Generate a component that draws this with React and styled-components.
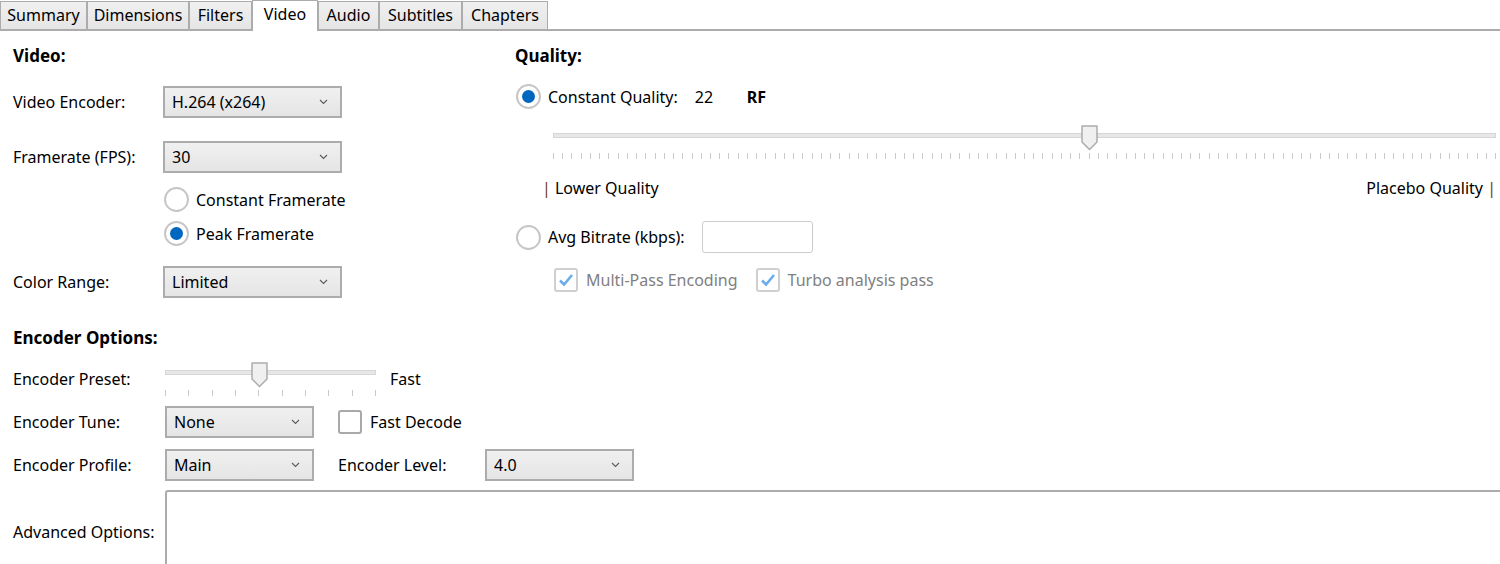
import React from "react";
import styled, { createGlobalStyle } from "styled-components";

const GlobalStyle = createGlobalStyle`
  html, body {
    margin: 0;
    padding: 0;
    background: #fff;
  }
  body {
    font-family: "Noto Sans", "Open Sans", sans-serif;
    font-size: 16px;
    color: #000;
    overflow: hidden;
  }
`;

const Window = styled.div`
  width: 1500px;
  height: 564px;
  overflow: hidden;
  background: #fff;
`;

const TabStrip = styled.div`
  display: flex;
  align-items: flex-end;
  height: 31px;
  box-sizing: border-box;
  border-bottom: 2px solid #acacac;
`;

const Tab = styled.div`
  box-sizing: border-box;
  width: ${(p) => p.$w}px;
  height: ${(p) => (p.$active ? 31 : 28)}px;
  margin-bottom: ${(p) => (p.$active ? -2 : 0)}px;
  padding-bottom: ${(p) => (p.$active ? 5 : 1)}px;
  display: flex;
  align-items: center;
  justify-content: center;
  border: 1px solid #acacac;
  border-bottom: none;
  background: ${(p) => (p.$active ? "#fff" : "linear-gradient(#f0f0f0, #e5e5e5)")};
  position: relative;
  z-index: ${(p) => (p.$active ? 1 : 0)};
`;

const Columns = styled.div`
  display: grid;
  grid-template-columns: 502px 1fr;
  padding-left: 13px;
`;

const Column = styled.div`
  display: flex;
  flex-direction: column;
`;

const SectionTitle = styled.div`
  font-weight: 700;
  font-size: 17px;
  line-height: 20px;
  height: 20px;
  margin-top: ${(p) => p.$mt}px;
`;

const Row = styled.div`
  display: flex;
  align-items: center;
  height: ${(p) => p.$h}px;
  margin-top: ${(p) => p.$mt}px;
  margin-left: ${(p) => p.$ml || 0}px;
  white-space: nowrap;
`;

const Label = styled.div`
  width: ${(p) => p.$w}px;
  flex-shrink: 0;
  margin-left: ${(p) => p.$ml || 0}px;
  white-space: nowrap;
`;

const SelectBox = styled.div`
  box-sizing: border-box;
  width: ${(p) => p.$w}px;
  height: 32px;
  border: 2px solid #acacac;
  background: linear-gradient(#f0f0f0, #e5e5e5);
  display: flex;
  align-items: center;
  justify-content: space-between;
  padding: 0 12px 0 7px;
  flex-shrink: 0;
`;

const Chevron = () => (
  <svg width="9" height="6" viewBox="0 0 9 6">
    <path d="M1 1 L4.5 4.5 L8 1" fill="none" stroke="#5a5a5a" strokeWidth="1.1" />
  </svg>
);

const Select = ({ w, value }) => (
  <SelectBox $w={w}>
    <span>{value}</span>
    <Chevron />
  </SelectBox>
);

const RadioCircle = styled.span`
  box-sizing: border-box;
  width: 25px;
  height: 25px;
  border-radius: 50%;
  border: 2px solid #c6c6c6;
  background: #fff;
  display: flex;
  align-items: center;
  justify-content: center;
  flex-shrink: 0;
  margin-right: 7px;
  &::after {
    content: "";
    display: ${(p) => (p.$on ? "block" : "none")};
    width: 13px;
    height: 13px;
    border-radius: 50%;
    background: #0067c0;
  }
`;

const Radio = ({ on, children }) => (
  <>
    <RadioCircle $on={on} />
    {children}
  </>
);

const CheckBox = styled.span`
  box-sizing: border-box;
  width: 24px;
  height: 24px;
  border: 2px solid ${(p) => (p.$disabled ? "#cfcfcf" : "#a9a9a9")};
  border-radius: 3px;
  background: #fff;
  display: flex;
  align-items: center;
  justify-content: center;
  flex-shrink: 0;
  margin-right: 8px;
  margin-left: ${(p) => p.$ml || 0}px;
`;

const CheckText = styled.span`
  color: ${(p) => (p.$disabled ? "#808080" : "#000")};
`;

const Tick = () => (
  <svg width="16" height="14" viewBox="0 0 16 14">
    <path d="M2 7.5 L6 11.5 L14 2" fill="none" stroke="#6badec" strokeWidth="2.6" />
  </svg>
);

const SliderWrap = styled.div`
  position: relative;
  width: ${(p) => p.$w}px;
  height: 34px;
  flex-shrink: 0;
`;

const Track = styled.div`
  box-sizing: border-box;
  margin-top: 8px;
  height: 5px;
  background: #e7e7e7;
  border: 1px solid #d6d6d6;
`;

const Thumb = styled.svg`
  position: absolute;
  top: 0;
  left: ${(p) => p.$x - 8}px;
`;

const Ticks = styled.svg`
  display: block;
  margin-top: 15px;
`;

const Slider = ({ w, fraction, ticks }) => {
  const marks = [];
  for (let i = 0; i < ticks; i++) {
    const x = Math.round((i * (w - 1)) / (ticks - 1)) + 0.5;
    marks.push(<line key={i} x1={x} x2={x} y1="0" y2="6" stroke="#cacaca" strokeWidth="1" />);
  }
  return (
    <SliderWrap $w={w}>
      <Track />
      <Ticks width={w} height="6">
        {marks}
      </Ticks>
      <Thumb $x={Math.round(fraction * w)} width="17" height="26" viewBox="0 0 17 26">
        <path
          d="M1 1 H16 V17 L8.5 24.5 L1 17 Z"
          fill="#f0f0f0"
          stroke="#acacac"
          strokeWidth="1.5"
          strokeLinejoin="round"
        />
      </Thumb>
    </SliderWrap>
  );
};

const QualityValue = styled.span`
  margin-left: 17px;
  width: 52px;
`;

const Bold = styled.span`
  font-weight: 700;
`;

const ScaleLabels = styled.div`
  display: flex;
  justify-content: space-between;
  width: 954px;
  margin-left: 27px;
  margin-top: 19px;
  line-height: 20px;
  height: 20px;
`;

const Bar = styled.span`
  color: #6b3d0c;
`;

const TextInput = styled.div`
  box-sizing: border-box;
  width: 111px;
  height: 32px;
  margin-left: 17px;
  border: 1.5px solid #cccccc;
  border-radius: 3px;
  background: #fff;
`;

const Section = styled.div`
  padding-left: 13px;
  display: flex;
  flex-direction: column;
`;

const PresetRow = styled.div`
  display: flex;
  align-items: flex-start;
  margin-top: 14px;
`;

const PresetText = styled.div`
  padding-top: 7px;
  line-height: 20px;
  width: ${(p) => p.$w || "auto"};
  margin-left: ${(p) => p.$ml || 0}px;
`;

const AdvancedRow = styled.div`
  display: flex;
  align-items: center;
  margin-top: 9px;
`;

const AdvancedBox = styled.div`
  box-sizing: border-box;
  width: 1345px;
  height: 84px;
  border: 2px solid #acacac;
  border-radius: 3px;
  flex-shrink: 0;
  background: #fff;
`;

const tabs = [
  ["Summary", 87],
  ["Dimensions", 102],
  ["Filters", 63],
  ["Video", 66],
  ["Audio", 61],
  ["Subtitles", 83],
  ["Chapters", 86],
];

export default function App() {
  return (
    <Window>
      <GlobalStyle />
      <TabStrip>
        {tabs.map(([t, w]) => (
          <Tab key={t} $w={w} $active={t === "Video"}>
            {t}
          </Tab>
        ))}
      </TabStrip>

      <Columns>
        <Column>
          <SectionTitle $mt={15}>Video:</SectionTitle>
          <Row $h={32} $mt={20}>
            <Label $w={150}>Video Encoder:</Label>
            <Select w={179} value="H.264 (x264)" />
          </Row>
          <Row $h={32} $mt={23}>
            <Label $w={150}>Framerate (FPS):</Label>
            <Select w={179} value="30" />
          </Row>
          <Row $h={25} $mt={14} $ml={151}>
            <Radio on={false}>Constant Framerate</Radio>
          </Row>
          <Row $h={25} $mt={9} $ml={151}>
            <Radio on>Peak Framerate</Radio>
          </Row>
          <Row $h={32} $mt={20}>
            <Label $w={150}>Color Range:</Label>
            <Select w={179} value="Limited" />
          </Row>
        </Column>

        <Column>
          <SectionTitle $mt={15}>Quality:</SectionTitle>
          <Row $h={25} $mt={18} $ml={1}>
            <Radio on>Constant Quality:</Radio>
            <QualityValue>22</QualityValue>
            <Bold>RF</Bold>
          </Row>
          <Row $h={34} $mt={16} $ml={38}>
            <Slider w={943} fraction={29 / 51} ticks={103} />
          </Row>
          <ScaleLabels>
            <span>
              <Bar>|</Bar> Lower Quality
            </span>
            <span>
              Placebo Quality <Bar>|</Bar>
            </span>
          </ScaleLabels>
          <Row $h={32} $mt={23} $ml={1}>
            <Radio on={false}>Avg Bitrate (kbps):</Radio>
            <TextInput />
          </Row>
          <Row $h={24} $mt={15} $ml={39}>
            <CheckBox $disabled>
              <Tick />
            </CheckBox>
            <CheckText $disabled>Multi-Pass Encoding</CheckText>
            <CheckBox $disabled $ml={18}>
              <Tick />
            </CheckBox>
            <CheckText $disabled>Turbo analysis pass</CheckText>
          </Row>
        </Column>
      </Columns>

      <Section>
        <SectionTitle $mt={30}>Encoder Options:</SectionTitle>
        <PresetRow>
          <PresetText $w="152px">Encoder Preset:</PresetText>
          <Slider w={211} fraction={4 / 9} ticks={10} />
          <PresetText $ml={14}>Fast</PresetText>
        </PresetRow>
        <Row $h={32} $mt={10}>
          <Label $w={152}>Encoder Tune:</Label>
          <Select w={149} value="None" />
          <CheckBox $ml={24} />
          <CheckText>Fast Decode</CheckText>
        </Row>
        <Row $h={32} $mt={11}>
          <Label $w={152}>Encoder Profile:</Label>
          <Select w={149} value="Main" />
          <Label $w={147} $ml={24}>
            Encoder Level:
          </Label>
          <Select w={149} value="4.0" />
        </Row>
        <AdvancedRow>
          <Label $w={152}>Advanced Options:</Label>
          <AdvancedBox />
        </AdvancedRow>
      </Section>
    </Window>
  );
}
